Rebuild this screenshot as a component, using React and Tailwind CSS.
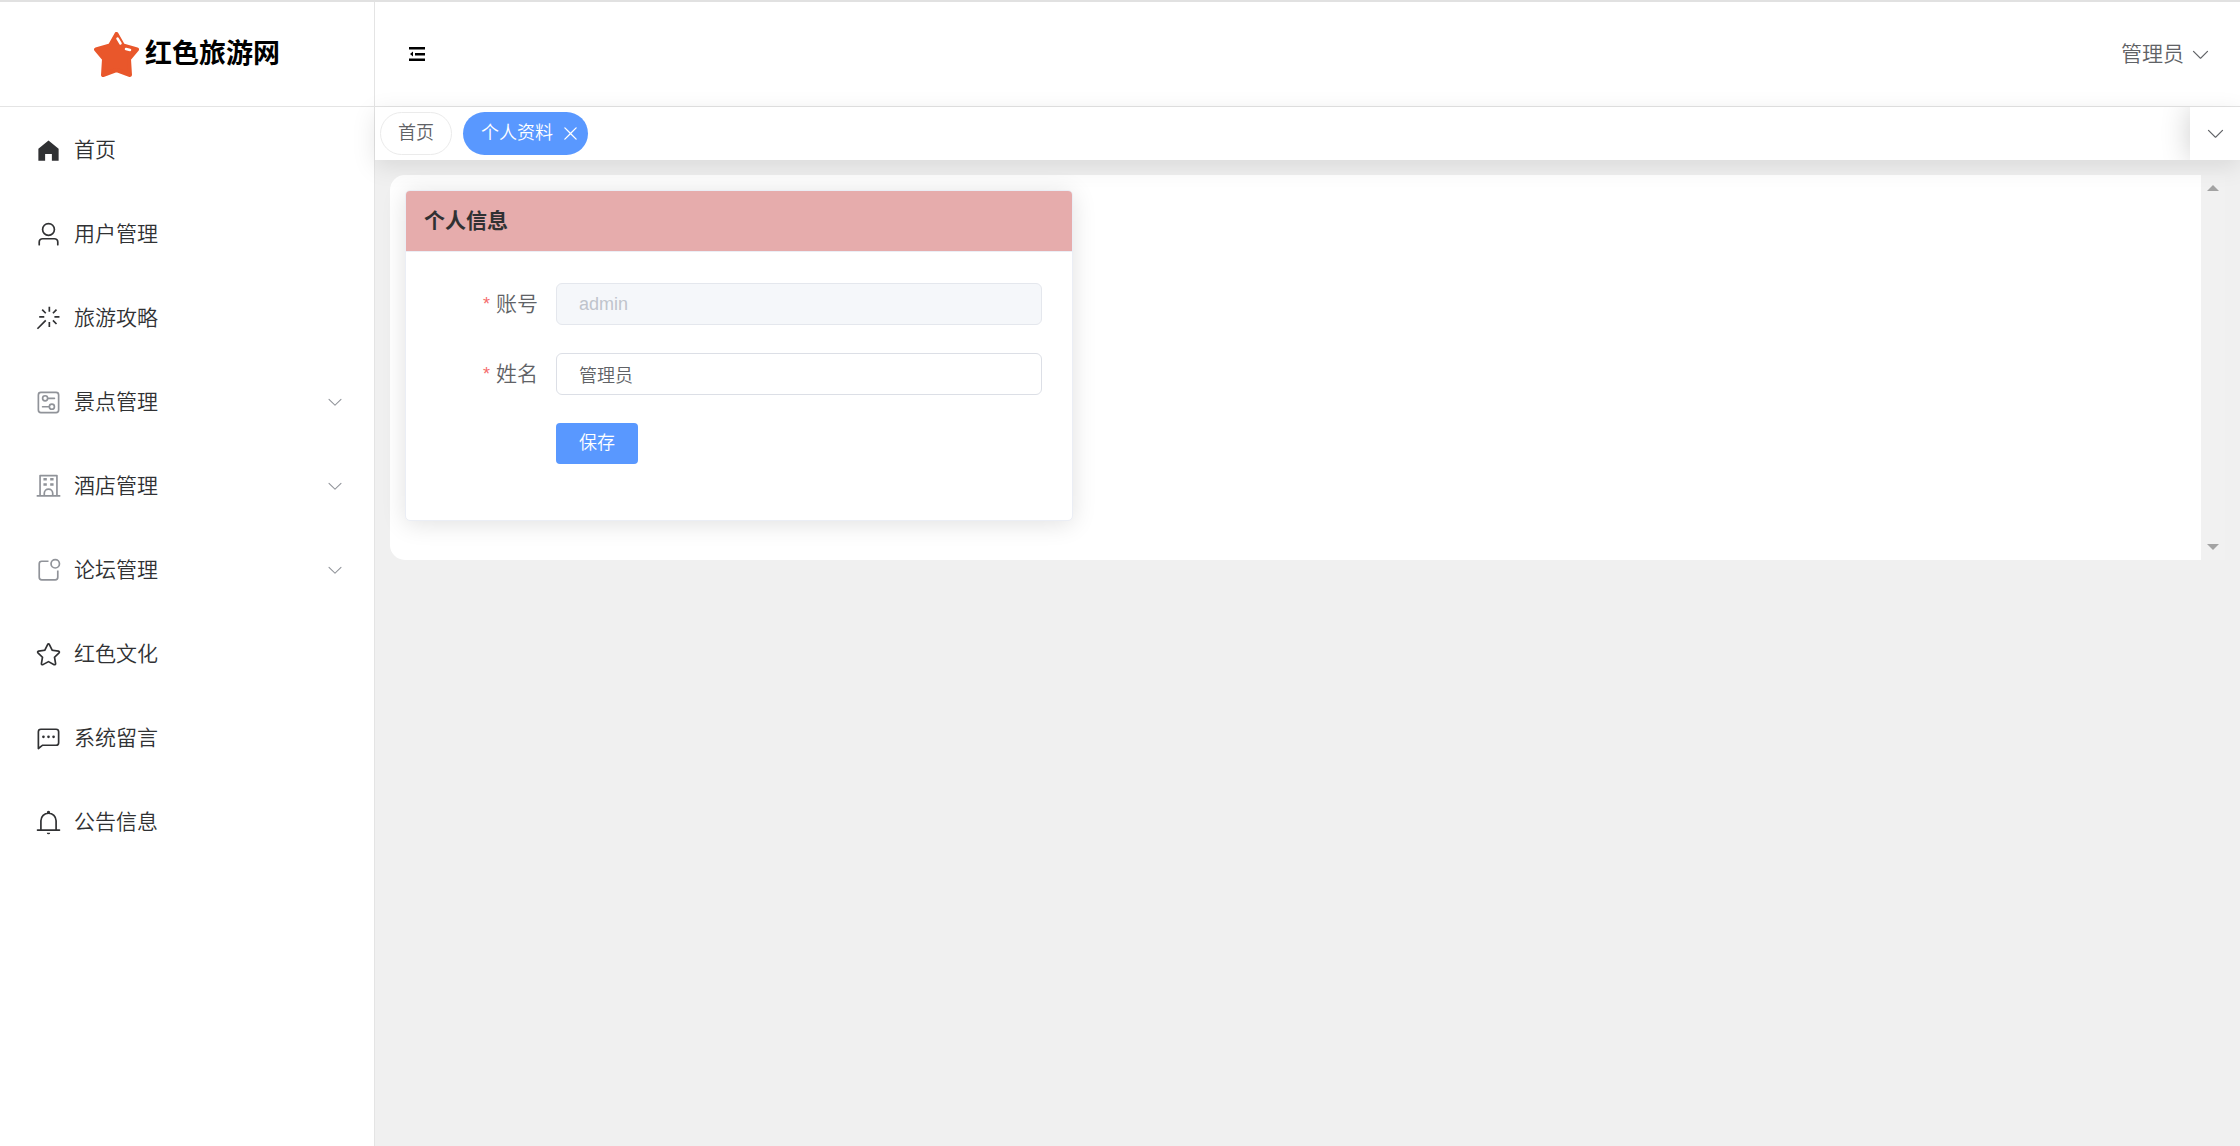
import { useState } from 'react';

const menus = [
    { name: '首页', icon: 'home' },
    { name: '用户管理', icon: 'user' },
    { name: '旅游攻略', icon: 'magic' },
    { name: '景点管理', icon: 'setup', children: true },
    { name: '酒店管理', icon: 'school', children: true },
    { name: '论坛管理', icon: 'notification', children: true },
    { name: '红色文化', icon: 'star' },
    { name: '系统留言', icon: 'chat' },
    { name: '公告信息', icon: 'bell' },
];

// all drawn on a 1024 grid
const icons = {
    home: 'M512 128 128 447.936V896h255.936V640H640v256h255.936V447.936z',
    user: 'M512 512a192 192 0 1 0 0-384 192 192 0 0 0 0 384m0 64a256 256 0 1 1 0-512 256 256 0 0 1 0 512m320 320v-96a96 96 0 0 0-96-96H288a96 96 0 0 0-96 96v96a32 32 0 1 1-64 0v-96a160 160 0 0 1 160-160h448a160 160 0 0 1 160 160v96a32 32 0 1 1-64 0',
    magic: 'M512 64h64v192h-64zm0 576h64v192h-64zM160 480v-64h192v64zm576 0v-64h192v64zM249.856 199.04l45.248-45.184L430.848 289.6 385.6 334.848 249.856 199.104zM657.152 606.4l45.248-45.248 135.744 135.744-45.248 45.248zM114.048 923.2 68.8 877.952l316.8-316.8 45.248 45.248zM702.4 334.848 657.152 289.6l135.744-135.744 45.248 45.248z',
    setup: 'M224 160a64 64 0 0 0-64 64v576a64 64 0 0 0 64 64h576a64 64 0 0 0 64-64V224a64 64 0 0 0-64-64zm0-64h576a128 128 0 0 1 128 128v576a128 128 0 0 1-128 128H224A128 128 0 0 1 96 800V224A128 128 0 0 1 224 96M384 416a64 64 0 1 0 0-128 64 64 0 0 0 0 128m0 64a128 128 0 1 1 0-256 128 128 0 0 1 0 256M480 320h256q32 0 32 32t-32 32H480q-32 0-32-32t32-32m160 416a64 64 0 1 0 0-128 64 64 0 0 0 0 128m0 64a128 128 0 1 1 0-256 128 128 0 0 1 0 256M288 640h256q32 0 32 32t-32 32H288q-32 0-32-32t32-32',
    school: 'M224 128v704h576V128zm-32-64h640a32 32 0 0 1 32 32v768a32 32 0 0 1-32 32H192a32 32 0 0 1-32-32V96a32 32 0 0 1 32-32M64 832h896v64H64zm256-640h128v96H320zM384 832h256v-64a128 128 0 1 0-256 0zm128-256a192 192 0 0 1 192 192v128H320V768a192 192 0 0 1 192-192M320 384h128v96H320zm256-192h128v96H576zm0 192h128v96H576z',
    notification: 'M512 128v64H256a64 64 0 0 0-64 64v512a64 64 0 0 0 64 64h512a64 64 0 0 0 64-64V512h64v256a128 128 0 0 1-128 128H256a128 128 0 0 1-128-128V256a128 128 0 0 1 128-128zM768 384a128 128 0 1 0 0-256 128 128 0 0 0 0 256m0 64a192 192 0 1 1 0-384 192 192 0 0 1 0 384',
    star: 'm512 747.84 228.16 119.936a6.4 6.4 0 0 0 9.28-6.72l-43.52-254.08 184.512-179.904a6.4 6.4 0 0 0-3.52-10.88l-255.104-37.12L517.76 147.904a6.4 6.4 0 0 0-11.52 0L392.192 379.072l-255.104 37.12a6.4 6.4 0 0 0-3.52 10.88L318.08 606.976l-43.584 254.08a6.4 6.4 0 0 0 9.28 6.72zM313.6 924.48a70.4 70.4 0 0 1-102.144-74.24l37.888-220.928L88.96 472.96A70.4 70.4 0 0 1 128 352.896l221.76-32.256 99.2-200.96a70.4 70.4 0 0 1 126.208 0l99.2 200.96 221.824 32.256a70.4 70.4 0 0 1 39.04 120.064L774.72 629.376l37.888 220.928a70.4 70.4 0 0 1-102.144 74.24L512 820.096l-198.4 104.32z',
    chat: 'M273.536 736H800a64 64 0 0 0 64-64V256a64 64 0 0 0-64-64H224a64 64 0 0 0-64 64v570.88zM296 800 147.968 918.4A32 32 0 0 1 96 893.44V256a128 128 0 0 1 128-128h576a128 128 0 0 1 128 128v416a128 128 0 0 1-128 128zM512 499.2a51.2 51.2 0 1 1 0-102.4 51.2 51.2 0 0 1 0 102.4m192 0a51.2 51.2 0 1 1 0-102.4 51.2 51.2 0 0 1 0 102.4m-384 0a51.2 51.2 0 1 1 0-102.4 51.2 51.2 0 0 1 0 102.4',
    bell: 'M512 64a64 64 0 0 1 64 64v64H448v-64a64 64 0 0 1 64-64M256 768h512V448a256 256 0 1 0-512 0zm256-640a320 320 0 0 1 320 320v384H192V448a320 320 0 0 1 320-320M96 768h832q32 0 32 32t-32 32H96q-32 0-32-32t32-32m352 128h128a64 64 0 0 1-128 0',
    down: 'M831.872 340.864 512 652.672 192.128 340.864a30.592 30.592 0 0 0-42.752 0 29.12 29.12 0 0 0 0 41.6L489.664 714.24a32 32 0 0 0 44.672 0l340.288-331.712a29.12 29.12 0 0 0 0-41.728 30.592 30.592 0 0 0-42.752 0z',
    close: 'M764.288 214.592 512 466.88 259.712 214.592a31.936 31.936 0 0 0-45.12 45.12L466.752 512 214.528 764.224a31.936 31.936 0 1 0 45.12 45.184L512 557.184l252.288 252.288a31.936 31.936 0 0 0 45.12-45.12L557.12 512.064l252.288-252.352a31.936 31.936 0 1 0-45.12-45.184z',
};

export default function App() {
    const [account] = useState('admin');
    const [name, setName] = useState('管理员');

    return (
        <div className="min-h-screen flex flex-col bg-[#f0f0f0] border-t-2 border-[#e1e1e1] font-['Liberation_Sans','Noto_Sans_CJK_SC',sans-serif] font-[350] text-[#303133]">
            <div className="flex-1 flex">
                {/* Sidebar */}
                <aside className="w-[375px] shrink-0 bg-white border-r border-[#e4e4e4]">
                    <div className="h-[105px] flex items-center justify-center gap-[6px] border-b border-[#e4e4e4]">
                        <LogoStar />
                        <h1 className="text-[27px] leading-none font-bold text-black">红色旅游网</h1>
                    </div>
                    <nav className="pt-px">
                        {menus.map((menu) => (
                            <MenuItem key={menu.name} menu={menu} />
                        ))}
                    </nav>
                </aside>

                <div className="flex-1 min-w-0">
                    {/* Header */}
                    <header className="h-[105px] flex items-center justify-between pl-[34px] pr-[29px] bg-white border-b border-[#e4e4e4]">
                        <button aria-label="收起菜单">
                            <FoldIcon />
                        </button>
                        <button className="flex items-center gap-[6px] text-[21px] text-[#606266]">
                            管理员
                            <Icon name="down" className="size-[21px]" />
                        </button>
                    </header>

                    {/* Tabs */}
                    <div className="relative z-10 h-[53px] flex items-center justify-between bg-white shadow-[0_6px_24px_rgba(0,0,0,0.1)]">
                        <div className="flex gap-[11px] pl-[5px] text-[18px]">
                            <a href="#" className="h-[43px] flex items-center px-[17px] rounded-full border border-[#ebebeb] text-[#606266]">首页</a>
                            <a href="#" className="h-[43px] flex items-center gap-[7px] pl-[18px] pr-[7px] rounded-full bg-[#5998ff] text-white">
                                个人资料
                                <Icon name="close" className="size-[21px]" />
                            </a>
                        </div>
                        <button aria-label="更多标签" className="w-[50px] h-full flex items-center justify-center bg-white text-[#606266] shadow-[0_0_30px_rgba(0,0,0,0.2)] [clip-path:inset(0_0_0_-40px)]">
                            <Icon name="down" className="size-[21px]" />
                        </button>
                    </div>

                    {/* Content */}
                    <main className="flex m-[15px]">
                        <div className="flex-1 min-w-0 p-[15px] pb-[39px] bg-white rounded-l-[15px]">
                            <section className="w-[668px] max-w-full rounded-[5px] overflow-hidden bg-white border border-[#ebeef5] shadow-[0_3px_24px_rgba(0,0,0,0.12)]">
                                <h2 className="h-[61px] flex items-center px-[18px] bg-[#e6acac] border-b border-[#ebeef5] text-[21px] font-bold">个人信息</h2>
                                <form className="flex flex-col gap-[28px] pt-[31px] px-[30px] pb-[56px]" onSubmit={(e) => e.preventDefault()}>
                                    <FormItem id="account" label="账号">
                                        <input
                                            id="account"
                                            value={account}
                                            disabled
                                            className="flex-1 min-w-0 h-[42px] px-[22px] rounded-[6px] border border-[#e4e7ed] bg-[#f5f7fa] text-[18px] text-[#c0c4cc]"
                                        />
                                    </FormItem>
                                    <FormItem id="name" label="姓名">
                                        <input
                                            id="name"
                                            value={name}
                                            onChange={(e) => setName(e.target.value)}
                                            className="flex-1 min-w-0 h-[42px] px-[22px] rounded-[6px] border border-[#dcdfe6] bg-white text-[18px] text-[#606266]"
                                        />
                                    </FormItem>
                                    <div className="pl-[120px]">
                                        <button type="submit" className="block h-[41px] px-[23px] rounded-[4px] bg-[#5998ff] text-[18px] text-white">保存</button>
                                    </div>
                                </form>
                            </section>
                        </div>
                        {/* Scroll track */}
                        <div className="w-[24px] shrink-0 flex flex-col items-center justify-between py-[10px] bg-[#f1f1f1]">
                            <svg className="w-[12px] h-[6px]" viewBox="0 0 12 6" fill="#a3a3a3"><path d="M6 0l6 6H0z" /></svg>
                            <svg className="w-[12px] h-[6px]" viewBox="0 0 12 6" fill="#a3a3a3"><path d="M0 0h12L6 6z" /></svg>
                        </div>
                    </main>
                </div>
            </div>
        </div>
    );
}

function MenuItem({ menu }) {
    const itemClass = 'w-full h-[84px] flex items-center gap-[12px] pl-[35px] pr-[30px] text-[21px]';

    if (menu.children) {
        return (
            <button className={itemClass}>
                <Icon name={menu.icon} className="size-[27px] text-[#909399]" />
                <span className="flex-1 text-left">{menu.name}</span>
                <Icon name="down" className="size-[18px] text-[#909399]" />
            </button>
        );
    }
    return (
        <a href="#" className={itemClass}>
            <Icon name={menu.icon} className="size-[27px]" />
            {menu.name}
        </a>
    );
}

function FormItem({ id, label, children }) {
    return (
        <div className="flex">
            <label htmlFor={id} className="w-[120px] h-[42px] shrink-0 flex items-center justify-end gap-[6px] pr-[18px] text-[21px] text-[#606266]">
                <span className="text-[18px] text-[#f56c6c]">*</span>
                {label}
            </label>
            {children}
        </div>
    );
}

function Icon({ name, className }) {
    return (
        <svg className={`${className} shrink-0`} viewBox="0 0 1024 1024" fill="currentColor" aria-hidden="true">
            <path d={icons[name]} />
        </svg>
    );
}

function LogoStar() {
    return (
        <svg className="size-[45px] shrink-0" viewBox="0 0 45 45" aria-hidden="true">
            <path
                d="M22.5 2L29 13.5L43 17.5L35 27L36 43L22.5 38L9 43L10 27L2 17.5L16 13.5Z"
                fill="#e9572b"
                stroke="#e9572b"
                strokeWidth="4"
                strokeLinejoin="round"
            />
            <path d="M23.5 6.5l3 5M32 17l4 1" fill="none" stroke="#fff" strokeWidth="2.5" strokeLinecap="round" />
        </svg>
    );
}

function FoldIcon() {
    return (
        <svg className="w-[16px] h-[14px]" viewBox="0 0 16 14" fill="#000" aria-hidden="true">
            <path d="M0 0h16v2.500H0zM6 6h10v2.500H6zM0 11.500h16V14H0zM1 7l3-2.500v5z" />
        </svg>
    );
}
